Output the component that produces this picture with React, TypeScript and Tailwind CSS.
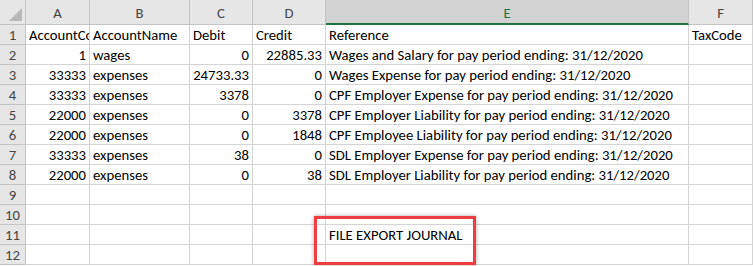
import React from "react";

const cols = ["A", "B", "C", "D", "E", "F"];

type Row = (string | number | null)[];
const rows: Row[] = [
  ["AccountCode", "AccountName", "Debit", "Credit", "Reference", "TaxCode"],
  [1, "wages", 0, 22885.33, "Wages and Salary for pay period ending: 31/12/2020", null],
  [33333, "expenses", 24733.33, 0, "Wages Expense for pay period ending: 31/12/2020", null],
  [33333, "expenses", 3378, 0, "CPF Employer Expense for pay period ending: 31/12/2020", null],
  [22000, "expenses", 0, 3378, "CPF Employer Liability for pay period ending: 31/12/2020", null],
  [22000, "expenses", 0, 1848, "CPF Employee Liability for pay period ending: 31/12/2020", null],
  [33333, "expenses", 38, 0, "SDL Employer Expense for pay period ending: 31/12/2020", null],
  [22000, "expenses", 0, 38, "SDL Employer Liability for pay period ending: 31/12/2020", null],
  [null, null, null, null, null, null],
  [null, null, null, null, null, null],
  [null, null, null, null, "FILE EXPORT JOURNAL", null],
  [null, null, null, null, null, null],
];

export default function App() {
  return (
    <div
      className="relative w-[753px] h-[266px] overflow-hidden bg-white text-black"
      style={{ fontFamily: "Carlito, 'Liberation Sans', Arial, sans-serif" }}
    >
      <div className="grid grid-cols-[26px_64px_100px_63px_73px_363px_64px] grid-rows-[25px_repeat(12,20px)] text-[14.7px] leading-[15px]">
        {/* header row */}
        <div className="relative bg-[#e6e6e6] border-r border-b border-[#c4c4c4]">
          <svg className="absolute right-[3px] bottom-[3px]" width="13" height="13" viewBox="0 0 13 13">
            <polygon points="13,0 13,13 0,13" fill="#b8b8b8" />
          </svg>
        </div>
        {cols.map((c) => (
          <div
            key={c}
            className={
              c === "E"
                ? "flex items-end justify-center bg-[#d2d2d2] border-r border-[#c4c4c4] border-b-2 border-b-[#217346] text-[#217346] pb-[2px]"
                : "flex items-end justify-center bg-[#e6e6e6] border-r border-b border-[#c4c4c4] text-[#444444] pb-[3px]"
            }
          >
            {c}
          </div>
        ))}
        {rows.map((r, i) => (
          <React.Fragment key={i}>
            <div className="flex items-end justify-center bg-[#e6e6e6] border-r border-b border-[#c4c4c4] text-[#444444] pb-[1px]">
              {i + 1}
            </div>
            {r.map((v, j) => {
              const isNum = typeof v === "number";
              return (
                <div
                  key={j}
                  className={
                    "flex items-end overflow-hidden whitespace-nowrap border-r border-b border-[#d4d4d4] px-[3px] pb-[1px] " +
                    (isNum ? "justify-end" : "justify-start")
                  }
                >
                  {v === null ? "" : String(v)}
                </div>
              );
            })}
          </React.Fragment>
        ))}
      </div>
      <div className="absolute left-[314px] top-[216px] w-[162px] h-[49px] border-[3px] border-[#ef3e42] shadow-[0_0_4px_rgba(0,0,0,0.35)]" />
    </div>
  );
}
